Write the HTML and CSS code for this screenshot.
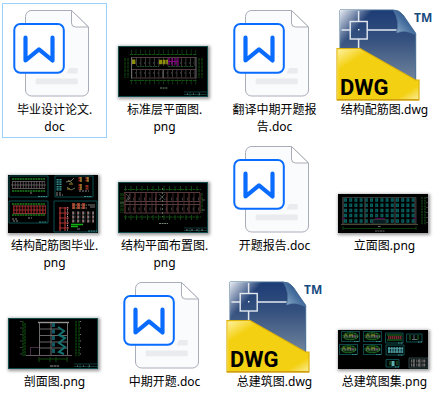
FILE: index.html
```
<!DOCTYPE html>
<html lang="zh-CN">
<head>
	<meta charset="utf-8">
	<title>毕业设计</title>
	<link rel="stylesheet" href="styles.css">
</head>
<body>
	<!-- shared file type icons -->
	<svg class="defs" width="0" height="0" aria-hidden="true">
		<defs>
			<linearGradient id="sheetFill" x1="0" y1="0" x2="0" y2="1">
				<stop offset="0" stop-color="#1d3c75"/>
				<stop offset="0.4" stop-color="#35517f"/>
				<stop offset="1" stop-color="#75899f"/>
			</linearGradient>
			<linearGradient id="sheetShine" x1="0" y1="0" x2="1" y2="1">
				<stop offset="0" stop-color="#fff" stop-opacity="0.9"/>
				<stop offset="0.25" stop-color="#fff" stop-opacity="0"/>
			</linearGradient>
			<linearGradient id="curlFill" x1="0" y1="1" x2="1" y2="0">
				<stop offset="0" stop-color="#9cb7d0"/>
				<stop offset="0.5" stop-color="#466f9f"/>
				<stop offset="1" stop-color="#173b70"/>
			</linearGradient>
			<linearGradient id="bandFill" x1="0" y1="0" x2="1" y2="1">
				<stop offset="0" stop-color="#fff3a8"/>
				<stop offset="0.22" stop-color="#f3d011"/>
				<stop offset="0.85" stop-color="#f3d011"/>
				<stop offset="1" stop-color="#fbeea0"/>
			</linearGradient>
			<symbol id="doc" viewBox="0 0 96 95">
				<path d="M25 4.500H65.500L82.500 21V84a6 6 0 0 1-6 6H25.500a6 6 0 0 1-6-6V10.500a6 6 0 0 1 6-6z" fill="#fafbfd" stroke="#a9adb8"/>
				<path d="M65.500 4.500V17a4 4 0 0 0 4 4H82.500z" fill="#fff" stroke="#a9adb8" stroke-linejoin="round"/>
				<path d="M63 62h7.500q1.200 0 1.200 1.200v3.200q0 1.200-1.200 1.200h-10z" fill="#e9ebee"/>
				<rect x="29.700" y="72.600" width="42" height="5.600" rx="1.200" fill="#e9ebee"/>
				<rect x="8.300" y="18" width="49.500" height="48.800" rx="6" fill="#fff" stroke="#0a6cff" stroke-width="2"/>
				<path d="M19.500 31.700V54.500L33 43.300L46.500 54.500V31.700" fill="none" stroke="#0a6cff" stroke-width="4.200" stroke-linecap="round" stroke-linejoin="round"/>
			</symbol>
			<symbol id="dwg" viewBox="0 0 96 95">
				<path d="M4 4H57Q63 4 67 9L79.700 28V78H4z" fill="url(#sheetFill)" stroke="#436a90"/>
				<path d="M4 4H57L70 78H4z" fill="url(#sheetShine)"/>
				<path d="M57 4Q64 14 60.500 27Q70 23 79.700 29V27L67 9Q63 4 57 4z" fill="url(#curlFill)" stroke="#4d7398" stroke-width="0.500"/>
				<path d="M5.500 24H14M31 24H60.500M22.600 5V15M22.600 33V44" stroke="#e4e9f0" stroke-width="1.500"/>
				<rect x="14.200" y="15.500" width="17" height="17.500" fill="none" stroke="#e4e9f0" stroke-width="1.400"/>
				<rect x="22" y="23" width="1.400" height="1.400" fill="#fff"/>
				<path d="M1 42.500H24L79.500 74H83V94H1z" fill="#f3d011"/>
				<path d="M1 42.500H24L79.500 74H83V94H1z" fill="url(#bandFill)" stroke="#dcb10d" stroke-width="1.200"/>
				<path d="M1.800 93V43.500H23.500" fill="none" stroke="#fbe25f" stroke-width="0.800"/>
				<path d="M1 93.700H83" stroke="#cf9d10" stroke-width="1.400"/>
				<text class="dwg-name" x="4" y="89">DWG</text>
				<text class="dwg-tm" x="78" y="16">TM</text>
			</symbol>
			<symbol id="plan" viewBox="0 0 22 13">
				<rect x="1.500" y="1.500" width="18" height="10" fill="#010806" stroke="#0d4646"/>
				<ellipse cx="10.500" cy="6.200" rx="7.500" ry="3.500" fill="#0c280d" stroke="#267f28" stroke-dasharray="2 0.500"/>
				<path d="M4 6.500H18" stroke="#5c735f" stroke-width="2.500" stroke-dasharray="1 0.600"/>
				<path d="M5 5h2M9 5h4" stroke="#a0a02a"/>
				<path d="M13 6h2" stroke="#8d2a8d"/>
				<path d="M14 11.500h5" stroke="#358e8e" stroke-dasharray="1 0.500"/>
			</symbol>
		</defs>
	</svg>

	<ul class="files">
		<li>
			<a class="file selected" href="#">
				<span class="art"><svg class="icon"><use href="#doc"/></svg></span>
				<span class="name">毕业设计论文.<br>doc</span>
			</a>
		</li>
		<li>
			<a class="file" href="#">
				<span class="art">
					<svg class="thumb" viewBox="0 0 90 51">
						<rect x="0.500" y="0.500" width="89" height="50" fill="#000" stroke="#124d4d"/>
						<path d="M13 6H79M13 36H79" stroke="#123e14" stroke-width="5" stroke-dasharray="0.800 3.800"/>
						<path d="M12 8.500H79M12 34.500H79M7 12V32M10 12V32M81 12V32M84 12V32" stroke="#125212" stroke-dasharray="3 0.700"/>
						<path d="M13.500 16H78M13.500 27.500H78" stroke="#484848" stroke-width="8" stroke-dasharray="0.800 3.700"/>
						<path d="M13.500 11.500H78M13.500 32H78M13.500 23.500H78" stroke="#523c40"/>
						<path d="M19 20.500H41M50 20.500H76" stroke="#20502a" stroke-dasharray="2 0.600"/>
						<path d="M13.500 11V32.500M78 11V32.500M45 24V32" stroke="#6a6a6a"/>
						<path d="M14 15.800H18M41 16H50" stroke="#8d8d09" stroke-width="4.500" stroke-dasharray="3 0.600"/>
						<path d="M51 12V19M54 12V19.500M57 12V19.500M60 12V20M51 15.500H60" stroke="#870087" stroke-width="1.200"/>
						<path d="M17 17H76M17 27H76" stroke="#555" stroke-dasharray="1 3.500"/>
						<path d="M42 42H50" stroke="#6f856f" stroke-dasharray="2 0.600"/>
						<path d="M66 46H89M66 48.500H89M72 46V50M81 46V50" stroke="#1a5252" stroke-width="0.700"/>
						<path d="M69 48H87" stroke="#888" stroke-dasharray="1 5"/>
					</svg>
				</span>
				<span class="name">标准层平面图.<br>png</span>
			</a>
		</li>
		<li>
			<a class="file" href="#">
				<span class="art"><svg class="icon"><use href="#doc"/></svg></span>
				<span class="name">翻译中期开题报<br>告.doc</span>
			</a>
		</li>
		<li>
			<a class="file" href="#">
				<span class="art"><svg class="icon"><use href="#dwg"/></svg></span>
				<span class="name">结构配筋图.dwg</span>
			</a>
		</li>
		<li>
			<a class="file" href="#">
				<span class="art">
					<svg class="thumb thumb-tall" viewBox="0 0 90 58">
						<rect width="90" height="58" fill="#000"/>
						<path d="M1 1H40V22H1zM1 26H40V48H1zM47 1H85V22H47zM46 26H89V57H46z" fill="none" stroke="#0d4e4e"/>
						<path d="M4 4H37M4 16H37M4 29H37M4 40H37" stroke="#145f14" stroke-width="2" stroke-dasharray="2 0.600"/>
						<path d="M4 10H37" stroke="#5b4850" stroke-width="7" stroke-dasharray="1 1.700"/>
						<path d="M3 10H38M4 6.500H37M4 13.500H37" stroke="#6a6a6a" stroke-width="0.800"/>
						<path d="M5 34.500H38" stroke="#7d1717" stroke-width="8" stroke-dasharray="1.600 1.300"/>
						<path d="M5 31H38M5 35H38M5 38.500H38" stroke="#924545" stroke-width="0.800"/>
						<path d="M30 21.500H39M31 47H39M76 21.500H84M80 56H89" stroke="#3a8c8c" stroke-dasharray="2 0.600"/>
						<path d="M51 4V16" stroke="#3a9595" stroke-width="5" stroke-dasharray="1.500 0.800"/>
						<path d="M51 4V16" stroke="#052929" stroke-width="1"/>
						<path d="M58 7l5-1 3-3M59 12l4 3 4-2M60 5l4 3" fill="none" stroke="#8f8f70" stroke-width="0.800"/>
						<path d="M61 9h4M59 14h3" stroke="#a5891f"/>
						<path d="M72 2v5M72 9v6M79 2v5M79 10v5" stroke="#933022" stroke-width="3" stroke-dasharray="2 0.500"/>
						<path d="M73 2v5M73 9v6M80 2v5" stroke="#b3a939"/>
						<path d="M48 18h5M4 44h6M20 43h4M5 46h5M71 16h10M48 20h7M22 18h3" stroke="#888" stroke-dasharray="2 1"/>
						<path d="M52 32V56M57 32V56" stroke="#912a2a" stroke-width="1.500"/>
						<path d="M59.500 32V56" stroke="#c0b0b0" stroke-dasharray="1 0.800"/>
						<path d="M51 33h10M51 38h10M51 43h10M51 48h10M51 53h10" stroke="#ab3535"/>
						<path d="M64 31H79" stroke="#923426" stroke-width="6" stroke-dasharray="3 2"/>
						<path d="M65 30H79M65 33H79" stroke="#b0a36a" stroke-width="0.800" stroke-dasharray="1.500 1"/>
						<path d="M64 38H86M64 42H86M64 46H86" stroke="#7c7c7c" stroke-width="3" stroke-dasharray="2 0.700 0.500 1.800"/>
						<path d="M64 38H86M64 42H86M64 46H86" stroke="#932a2a" stroke-dasharray="1 4"/>
						<path d="M63 49.500h12M63 51.500h7" stroke="#10b010" stroke-width="1.300"/>
						<path d="M80 30h7M82 32h5M69 54h3" stroke="#999" stroke-width="0.800"/>
					</svg>
				</span>
				<span class="name">结构配筋图毕业.<br>png</span>
			</a>
		</li>
		<li>
			<a class="file" href="#">
				<span class="art">
					<svg class="thumb" viewBox="0 0 90 51">
						<rect x="0.500" y="0.500" width="89" height="50" fill="#000" stroke="#124d4d"/>
						<path d="M7 6.500H83M7 35.500H83" stroke="#124216" stroke-width="5" stroke-dasharray="1 4.500"/>
						<path d="M6 7.500H83M6 35H83M3 11V31M5 11V31M84 11V31" stroke="#125212" stroke-dasharray="3 0.800"/>
						<path d="M7 11V31M17 11V31M28 11V31M38 11V31M49 11V31M60 11V31M71 11V31M82 11V31" stroke="#743d3d"/>
						<path d="M12 11V31M23 11V31M34 11V31M55 11V31M66 11V31M76 11V31" stroke="#432627"/>
						<path d="M6 10.500H82M6 19.500H82M6 22.500H82M6 31H82" stroke="#563b3e"/>
						<path d="M10 17H82M10 27H82" stroke="#555" stroke-width="3" stroke-dasharray="0.700 4.700"/>
						<path d="M8 12l4 4-4 3 4-7M41 12l6 6M47 12l-6 6" fill="none" stroke="#777" stroke-width="0.500"/>
						<path d="M44.500 6V35" stroke="#566c56" stroke-dasharray="2 2"/>
						<path d="M2 21h4M84 18h3M84 28h3" stroke="#777" stroke-width="0.700"/>
						<path d="M41 41.500H50" stroke="#748474" stroke-dasharray="2 0.600"/>
						<path d="M66 46H89M66 48.500H89M72 46V50M81 46V50" stroke="#1a5252" stroke-width="0.700"/>
						<path d="M68 48H88" stroke="#777" stroke-dasharray="2 3"/>
					</svg>
				</span>
				<span class="name">结构平面布置图.<br>png</span>
			</a>
		</li>
		<li>
			<a class="file" href="#">
				<span class="art"><svg class="icon"><use href="#doc"/></svg></span>
				<span class="name">开题报告.doc</span>
			</a>
		</li>
		<li>
			<a class="file" href="#">
				<span class="art">
					<svg class="thumb thumb-low" viewBox="0 0 90 39">
						<rect width="90" height="39" fill="#000"/>
						<path d="M5 3.500H78V30H5z" fill="none" stroke="#383838"/>
						<path d="M6 6H78M6 11.200H78M6 16.400H78M6 21.600H78M6 27H78" stroke="#086262" stroke-width="3.500" stroke-dasharray="3 2.200"/>
						<path d="M7 6H78M7 11.200H78M7 16.400H78M7 21.600H78M7 27H78" stroke="#043c3c" stroke-width="2" stroke-dasharray="0.700 4.500"/>
						<path d="M27 4V30M57 4V30M5 3V30M77 3V30" stroke="#3c3c3c" stroke-width="1.300"/>
						<path d="M35 25.500H48V30H35z" fill="#081e20" stroke="#333"/>
						<path d="M37 24.500H47M4 24.500H7M75 24.500H79" stroke="#4a004a"/>
						<path d="M3 30.500H80" stroke="#4c4837"/>
						<path d="M5 34.500H78M5 32V36M78 32V36" stroke="#0f3a0f"/>
						<path d="M84 3V31M87 3V31" stroke="#134a17" stroke-width="1.300" stroke-dasharray="2 0.800"/>
						<path d="M89 3V31" stroke="#666" stroke-dasharray="1 4"/>
						<path d="M37 37H47M40 32.500h3" stroke="#888" stroke-width="0.800" stroke-dasharray="2 0.500"/>
					</svg>
				</span>
				<span class="name">立面图.png</span>
			</a>
		</li>
		<li>
			<a class="file" href="#">
				<span class="art">
					<svg class="thumb" viewBox="0 0 90 51">
						<rect x="0.500" y="0.500" width="89" height="50" fill="#000" stroke="#124d4d"/>
						<path d="M15 3V38M17 5V38M68 3V38M71 3V38" stroke="#105210" stroke-width="1.200" stroke-dasharray="2.500 0.600"/>
						<path d="M13 3V38M72.500 3V38" stroke="#777" stroke-dasharray="1 5.500"/>
						<path d="M31.500 5V38M59.500 5V38M43 5V38" stroke="#6c6c6c"/>
						<path d="M30 4.500H61" stroke="#969696" stroke-width="1.400"/>
						<path d="M31 11H52M31 17.500H60M31 24H60M31 30H60" stroke="#666"/>
						<path d="M45.500 5V36" stroke="#125b64" stroke-width="3" stroke-dasharray="4 2.500"/>
						<path d="M50 9l6 4-5 4 6 3-6 5 6 4-6 5 5 2" fill="none" stroke="#147272" stroke-width="2"/>
						<path d="M22 29.500H31M22.500 30V37" stroke="#442a45"/>
						<path d="M18 37.500H64" stroke="#655865"/>
						<path d="M31 41H60M31 39V44M42 39V44M48 39V44M59 39V44" stroke="#124612"/>
						<path d="M42 48H51" stroke="#999" stroke-dasharray="3 0.500"/>
						<path d="M66 46H89M66 48.500H89M72 46V50M81 46V50" stroke="#1a5252" stroke-width="0.700"/>
						<path d="M69 48H87" stroke="#888" stroke-dasharray="1 5"/>
					</svg>
				</span>
				<span class="name">剖面图.png</span>
			</a>
		</li>
		<li>
			<a class="file" href="#">
				<span class="art"><svg class="icon"><use href="#doc"/></svg></span>
				<span class="name">中期开题.doc</span>
			</a>
		</li>
		<li>
			<a class="file" href="#">
				<span class="art"><svg class="icon"><use href="#dwg"/></svg></span>
				<span class="name">总建筑图.dwg</span>
			</a>
		</li>
		<li>
			<a class="file" href="#">
				<span class="art">
					<svg class="thumb thumb-low" viewBox="0 0 90 39">
						<rect width="90" height="39" fill="#000"/>
						<use href="#plan" x="2" y="0" width="22" height="13"/>
						<use href="#plan" x="24" y="0" width="22" height="13"/>
						<use href="#plan" x="0" y="13" width="22" height="13"/>
						<use href="#plan" x="24" y="13" width="22" height="13"/>
						<path d="M47.500 3H65V13H47.500zM68.500 4H84V12H68.500zM48 15H66V25H48zM48 29.500H61V37H48z" fill="#010808" stroke="#0e4d4d"/>
						<path d="M49 5H64M49 10H64" stroke="#237d23"/>
						<path d="M50 7.500H64" stroke="#782a31" stroke-width="3" stroke-dasharray="1.500 0.500"/>
						<path d="M72 5V10M80 5V10M52 31V35M59 31V35" stroke="#237523"/>
						<path d="M74 9.500H79M76 5V9" stroke="#77858a" stroke-width="0.800"/>
						<path d="M50 20H65" stroke="#38868b" stroke-width="6" stroke-dasharray="2 0.700"/>
						<path d="M50 18.500H65M50 22H65" stroke="#73aaad" stroke-width="0.600"/>
						<path d="M55 31V36" stroke="#5eafb0" stroke-width="3"/>
						<path d="M60 13H65M80 12H84M60 25H65M57 37H61" stroke="#479999" stroke-dasharray="1 0.500"/>
						<path d="M71 28H90V38H71z" fill="#101414" stroke="#2a4042"/>
						<path d="M73 31H89M73 35H89" stroke="#6c6c6c" stroke-width="3" stroke-dasharray="1 0.700 2 1.600"/>
						<path d="M76 29V37M82 29V37" stroke="#666"/>
					</svg>
				</span>
				<span class="name">总建筑图集.png</span>
			</a>
		</li>
	</ul>
</body>
</html>
```
FILE: styles.css
```
body
{
	margin: 0;
	background-color: #fff;
	color: #000;
	font-family: "Noto Sans", "Noto Sans CJK SC", sans-serif;
	font-size: 12px;
	line-height: 17px;
}
.defs
{
	display: block;
}
.files
{
	display: grid;
	grid-template-columns: repeat(auto-fill, 105px);
	column-gap: 5px;
	row-gap: 1px;
	margin: 0;
	padding: 3px 2px;
	list-style: none;
}
.file
{
	display: block;
	box-sizing: border-box;
	min-height: 135px;
	padding: 2px 3px 0;
	border: 1px solid transparent;
	color: #000;
	text-decoration: none;
}
.file:hover
{
	background-color: #e5f3ff;
}
.file.selected
{
	border-color: #99d1ff;
}
.art
{
	display: flex;
	align-items: flex-end;
	width: 96px;
	height: 95px;
}
.icon
{
	width: 96px;
	height: 95px;
}
.thumb
{
	width: 90px;
	height: 51px;
	margin: 0 2px 4px;
	box-shadow: 1px 1px 3px 1px rgba(0, 0, 0, 0.4);
}
.thumb-tall
{
	height: 58px;
}
.thumb-low
{
	height: 39px;
}
.name
{
	display: block;
	text-align: center;
	white-space: nowrap;
}
.dwg-name
{
	font: bold 22px Roboto, sans-serif;
	fill: #000;
}
.dwg-tm
{
	font: bold 12px "Noto Sans", sans-serif;
	fill: #174a80;
}
```
